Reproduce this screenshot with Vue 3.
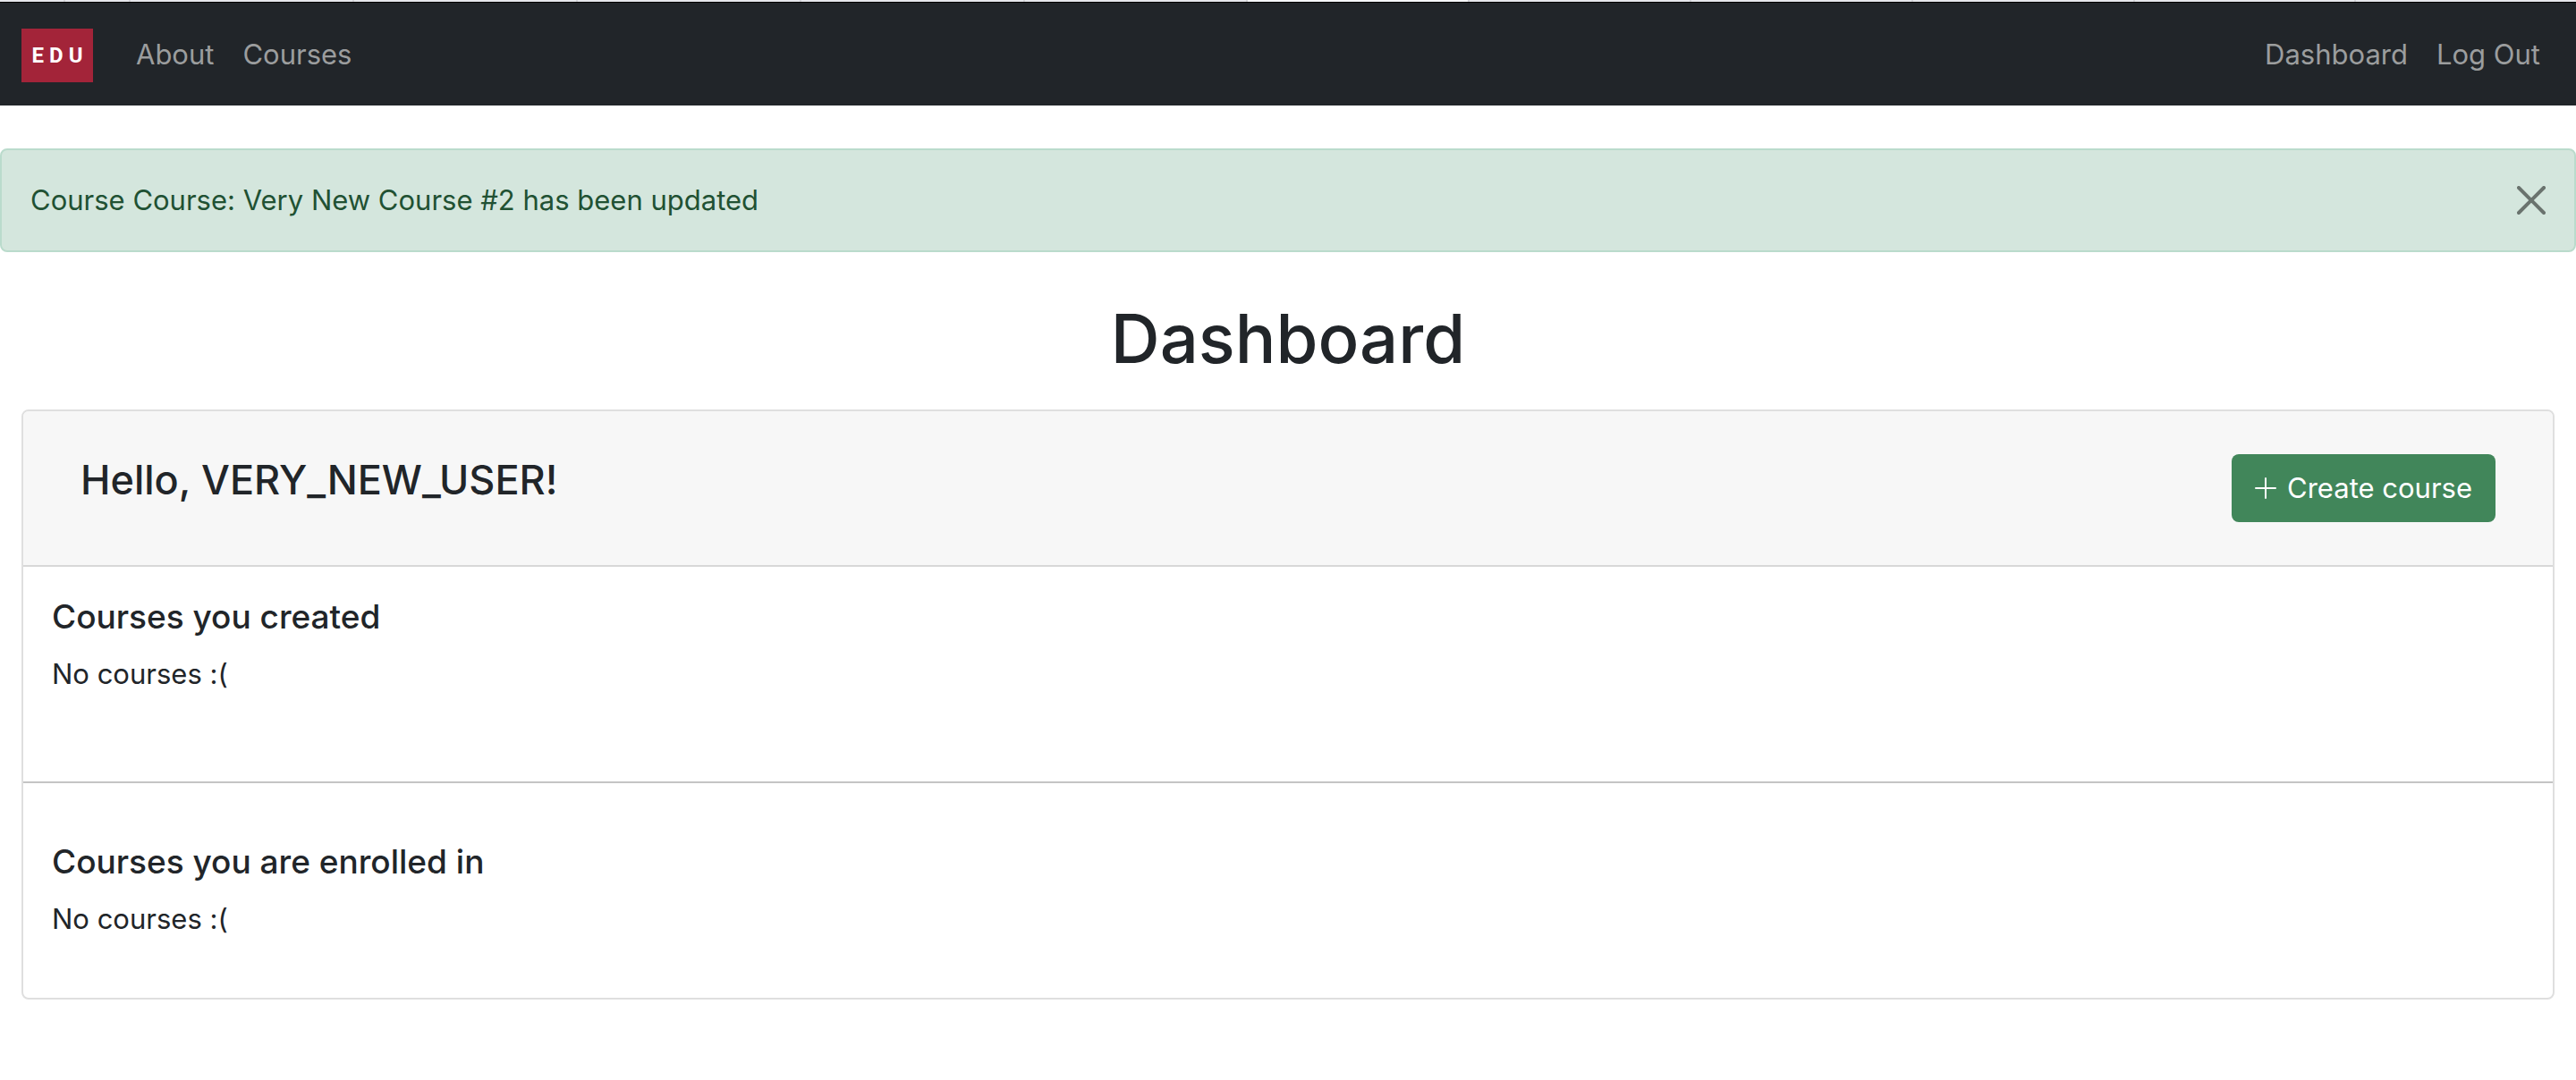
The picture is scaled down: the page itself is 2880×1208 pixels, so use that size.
<script setup>
import { ref } from 'vue'

const alertOpen = ref(true)
// relative widths of the segments in the thin strip above the navbar
const strip = [72, 71, 250, 250, 250, 250, 250, 248, 248, 248, 248, 247, 248]
const activeSegment = 7
const sections = [
  { title: 'Courses you created', empty: 'No courses :(' },
  { title: 'Courses you are enrolled in', empty: 'No courses :(' },
]
</script>

<template>
  <div class="page">
    <div class="strip" aria-hidden="true">
      <i v-for="(w, i) in strip" :key="i" :class="{ active: i === activeSegment }" :style="{ flexGrow: w }"></i>
    </div>
    <header class="navbar">
      <a class="brand" href="#" aria-label="Home">EDU</a>
      <nav class="links">
        <a href="#">About</a>
        <a href="#">Courses</a>
      </nav>
      <nav class="links account">
        <a href="#">Dashboard</a>
        <a href="#">Log Out</a>
      </nav>
    </header>

    <div v-if="alertOpen" class="alert" role="alert">
      <span>Course Course: Very New Course #2 has been updated</span>
      <button class="close" type="button" aria-label="Close" @click="alertOpen = false">
        <svg viewBox="0 0 16 16" aria-hidden="true">
          <path d="M.293.293a1 1 0 0 1 1.414 0L8 6.586 14.293.293a1 1 0 1 1 1.414 1.414L9.414 8l6.293 6.293a1 1 0 0 1-1.414 1.414L8 9.414l-6.293 6.293a1 1 0 0 1-1.414-1.414L6.586 8 .293 1.707a1 1 0 0 1 0-1.414z" />
        </svg>
      </button>
    </div>

    <main>
      <h1>Dashboard</h1>
      <div class="card">
        <div class="card-header">
          <h2>Hello, VERY_NEW_USER!</h2>
          <button class="create" type="button">
            <svg viewBox="0 0 24 24" aria-hidden="true">
              <path d="M12 1v22M1 12h22" />
            </svg>
            Create course
          </button>
        </div>
        <section v-for="s in sections" :key="s.title">
          <h3>{{ s.title }}</h3>
          <p>{{ s.empty }}</p>
        </section>
      </div>
    </main>
  </div>
</template>

<style>
body {
  margin: 0;
  background: #fff;
}
</style>

<style scoped>
.page {
  font: 400 31px/48px Inter, 'Liberation Sans', sans-serif;
  color: #212529;
}
h1,
h2,
h3,
p {
  margin: 0;
}
.strip {
  display: flex;
  height: 2px;
  background: #e6e7eb;
}
.strip i {
  flex: 1 1 0;
  box-sizing: border-box;
  border-right: 2px solid #d3d4d8;
}
.strip i:last-child {
  border-right: 0;
}
.strip .active {
  background: #f6f7f9;
}
.navbar {
  display: flex;
  align-items: center;
  padding: 16px 24px 14px;
  background: #212529;
  box-shadow: inset 0 1px #000;
}
.brand {
  box-sizing: border-box;
  width: 80px;
  margin: 14px 32px 12px 0;
  padding-left: 6px;
  background: #a32439;
  color: #fff;
  font: 700 24px/60px Roboto, sans-serif;
  letter-spacing: 6px;
  text-align: center;
  text-decoration: none;
}
.links {
  display: flex;
}
.links a {
  padding: 16px;
  color: #9b9d9e;
  text-decoration: none;
}
.account {
  margin-left: auto;
}
.alert {
  display: flex;
  align-items: center;
  justify-content: space-between;
  margin-top: 48px;
  padding: 32px;
  border: 2px solid #badbcc;
  border-radius: 8px;
  background: #d4e6dd;
  color: #215133;
}
.close {
  display: flex;
  padding: 0;
  border: 0;
  background: none;
  cursor: pointer;
}
.close svg {
  width: 32px;
  height: 32px;
  fill: #6a736e;
}
main {
  padding: 48px 24px;
}
h1 {
  margin-bottom: 32px;
  font-size: 76px;
  line-height: 96px;
  font-weight: 500;
  text-align: center;
}
.card {
  border: 2px solid #dfdfdf;
  border-radius: 8px;
}
.card-header {
  display: flex;
  align-items: flex-start;
  justify-content: space-between;
  padding: 48px 64px;
  border-bottom: 2px solid #d8d8d8;
  border-radius: 6px 6px 0 0;
  background: #f7f7f7;
}
h2 {
  font-size: 45px;
  line-height: 58px;
  font-weight: 500;
}
.create {
  display: flex;
  align-items: center;
  gap: 12px;
  padding: 14px 26px;
  border: 0;
  border-radius: 8px;
  background: #41865a;
  color: #fff;
  font: inherit;
  cursor: pointer;
}
.create svg {
  width: 24px;
  height: 24px;
  fill: none;
  stroke: currentColor;
  stroke-width: 2;
  stroke-linecap: round;
}
section {
  padding: 32px 32px 96px;
}
section + section {
  padding: 64px 32px;
  border-top: 2px solid #c4c4c4;
}
h3 {
  margin-bottom: 16px;
  font-size: 37px;
  line-height: 48px;
  font-weight: 500;
}
</style>
